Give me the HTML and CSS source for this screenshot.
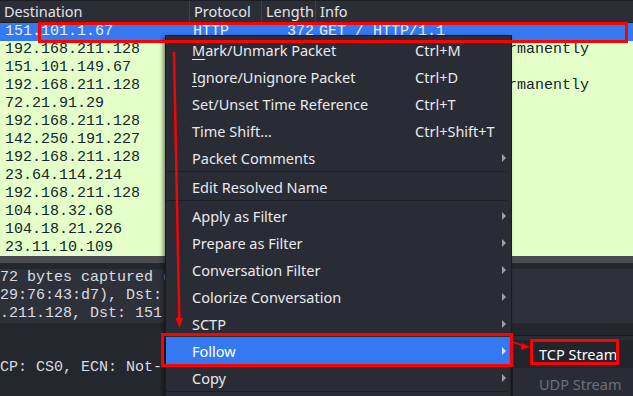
FILE: index.html
```html
<!DOCTYPE html>
<html lang="en">
<head>
    <meta charset="UTF-8">
    <title>Wireshark - Follow TCP Stream</title>
    <link rel="stylesheet" href="styles.css">
</head>
<body>
    <div class="app">
        <div class="pkt-list">
            <div class="pkt-head">
                <div class="col c-dst">Destination</div>
                <div class="col c-proto">Protocol</div>
                <div class="col c-len">Length</div>
                <div class="col c-info">Info</div>
            </div>
            <div class="row selected">
                <div class="col c-dst">151.101.1.67</div>
                <div class="col c-proto">HTTP</div>
                <div class="col c-len">372</div>
                <div class="col c-info">GET / HTTP/1.1</div>
            </div>
            <!-- rows below sit under the context menu, only the ends show -->
            <div class="row">
                <div class="col c-dst">192.168.211.128</div>
                <div class="col c-proto"></div>
                <div class="col c-len"></div>
                <div class="col c-info tail">rmanently</div>
            </div>
            <div class="row"><div class="col c-dst">151.101.149.67</div></div>
            <div class="row">
                <div class="col c-dst">192.168.211.128</div>
                <div class="col c-proto"></div>
                <div class="col c-len"></div>
                <div class="col c-info tail">rmanently</div>
            </div>
            <div class="row"><div class="col c-dst">72.21.91.29</div></div>
            <div class="row"><div class="col c-dst">192.168.211.128</div></div>
            <div class="row"><div class="col c-dst">142.250.191.227</div></div>
            <div class="row"><div class="col c-dst">192.168.211.128</div></div>
            <div class="row"><div class="col c-dst">23.64.114.214</div></div>
            <div class="row"><div class="col c-dst">192.168.211.128</div></div>
            <div class="row"><div class="col c-dst">104.18.32.68</div></div>
            <div class="row"><div class="col c-dst">104.18.21.226</div></div>
            <div class="row"><div class="col c-dst">23.11.10.109</div></div>
        </div>
        <div class="hscroll"></div>
        <div class="details">
            <div class="line band">72 bytes captured (</div>
            <div class="line band">29:76:43:d7), Dst:</div>
            <div class="line band">.211.128, Dst: 151.</div>
            <div class="line"></div>
            <div class="line"></div>
            <div class="line">CP: CS0, ECN: Not-</div>
        </div>
    </div>

    <div class="menu">
        <div class="item"><span class="label"><u>M</u>ark/Unmark Packet</span><span class="key">Ctrl+M</span></div>
        <div class="item"><span class="label"><u>I</u>gnore/Unignore Packet</span><span class="key">Ctrl+D</span></div>
        <div class="item"><span class="label">Set/Unset Time Reference</span><span class="key">Ctrl+T</span></div>
        <div class="item"><span class="label">Time Shift…</span><span class="key">Ctrl+Shift+T</span></div>
        <div class="item sub"><span class="label">Packet Comments</span></div>
        <div class="sep"></div>
        <div class="item"><span class="label">Edit Resolved Name</span></div>
        <div class="sep"></div>
        <div class="item sub"><span class="label">Apply as Filter</span></div>
        <div class="item sub"><span class="label">Prepare as Filter</span></div>
        <div class="item sub"><span class="label">Conversation Filter</span></div>
        <div class="item sub"><span class="label">Colorize Conversation</span></div>
        <div class="item sub"><span class="label">SCTP</span></div>
        <div class="item sub active"><span class="label">Follow</span></div>
        <div class="item sub"><span class="label">Copy</span></div>
        <div class="sep"></div>
    </div>

    <div class="submenu">
        <div class="item"><span class="label">TCP Stream</span></div>
        <div class="item disabled"><span class="label">UDP Stream</span></div>
    </div>

    <svg class="marks" width="633" height="396" viewBox="0 0 633 396">
        <rect x="39.5" y="23.5" width="587" height="18" fill="none" stroke="#ff0000" stroke-width="3"/>
        <rect x="162.5" y="334.5" width="349" height="31" fill="none" stroke="#ff0000" stroke-width="3"/>
        <rect x="531.5" y="340.5" width="86" height="23" fill="none" stroke="#ff0000" stroke-width="3"/>
        <line x1="174" y1="52" x2="179.3" y2="320" stroke="#ff0000" stroke-width="2.4"/>
        <polygon points="175.5,318 183,318 179.5,328" fill="#ff0000"/>
        <line x1="513" y1="342" x2="524" y2="346" stroke="#ff0000" stroke-width="1.8"/>
        <polygon points="522,343 530,347 521,350" fill="#ff0000"/>
    </svg>
</body>
</html>
```

FILE: styles.css
```css
body {
    margin: 0;
    background: #25272e;
    overflow: hidden;
}
.app {
    width: 633px;
    height: 396px;
    display: flex;
    flex-direction: column;
    overflow: hidden;
}
.pkt-list {
    height: 256px;
    overflow: hidden;
    background: #e4ffc7;
    flex-shrink: 0;
}
.pkt-head {
    display: flex;
    height: 21px;
    background: #2b2e36;
    border-top: 1px solid #1c1e23;
    border-bottom: 1px solid #1c1e23;
    font-family: "Noto Sans", sans-serif;
    font-size: 14.5px;
    color: #e3e4e8;
    line-height: 20px;
}
.pkt-head .col {
    border-right: 1px solid #3e414a;
    padding-left: 4px;
}
.pkt-head .c-info {
    border-right: none;
}
.col {
    box-sizing: border-box;
    white-space: nowrap;
    overflow: hidden;
    flex-shrink: 0;
}
.c-dst { width: 190px; }
.c-proto { width: 72px; }
.c-len { width: 54px; }
.c-info { flex: 1; }
.row {
    display: flex;
    height: 18px;
    line-height: 18px;
    font-family: "Liberation Mono", monospace;
    font-size: 15px;
    color: #12272e;
}
.row .col {
    padding-left: 5px;
}
.row .c-proto {
    padding-left: 3px;
}
.row .c-len {
    text-align: right;
    padding-right: 2px;
}
.row .c-info {
    padding-left: 3px;
}
.row .c-info.tail {
    padding-left: 192px;
}
.row.selected {
    background: #3479f2;
    color: #e6edfd;
}
.hscroll {
    height: 7px;
    background: #4a4c52;
    flex-shrink: 0;
}
.details {
    padding-top: 6px;
    font-family: "Liberation Mono", monospace;
    font-size: 15px;
    color: #d9dbe0;
}
.line {
    height: 18px;
    line-height: 18px;
    white-space: nowrap;
    overflow: hidden;
}
.line.band {
    background: #2f313a;
}
.menu {
    position: absolute;
    left: 165px;
    top: 35px;
    width: 345px;
    height: 361px;
    overflow: hidden;
    background: #2a2c35;
    border: 1px solid #1a1b20;
    border-bottom: none;
    box-shadow: -2px 2px 4px rgba(0, 0, 0, 0.45);
    font-family: "Noto Sans", sans-serif;
    font-size: 14.5px;
    color: #e8e9ec;
}
.item {
    height: 27px;
    display: flex;
    align-items: center;
    padding-left: 26px;
    position: relative;
    white-space: nowrap;
}
.item .label {
    width: 223px;
}
.item u {
    text-underline-offset: 3px;
}
.item.sub::after {
    content: "";
    position: absolute;
    right: 5px;
    top: 10px;
    border-left: 4px solid #9ea0a6;
    border-top: 4px solid transparent;
    border-bottom: 4px solid transparent;
}
.item.active {
    background: #3479f2;
    color: #ffffff;
}
.item.active::after {
    border-left-color: #d6e2fb;
}
.sep {
    height: 1px;
    margin: 0 4px 1px 0;
    background: #1d1f25;
}
.submenu {
    position: absolute;
    left: 512px;
    top: 335px;
    width: 121px;
    height: 61px;
    overflow: hidden;
    background: #2a2c35;
    border-top: 1px solid #1a1b20;
    border-left: 1px solid #1a1b20;
    box-shadow: 0 2px 4px rgba(0, 0, 0, 0.45);
    font-family: "Noto Sans", sans-serif;
    font-size: 14.5px;
    color: #ffffff;
}
.submenu .item {
    padding-left: 26px;
    height: 28px;
    margin-top: 2px;
}
.submenu .item:first-child {
    background: #23252d;
    margin-top: 4px;
}
.submenu .item.disabled {
    color: #6c6f77;
}
.marks {
    position: absolute;
    left: 0;
    top: 0;
    pointer-events: none;
}
```
